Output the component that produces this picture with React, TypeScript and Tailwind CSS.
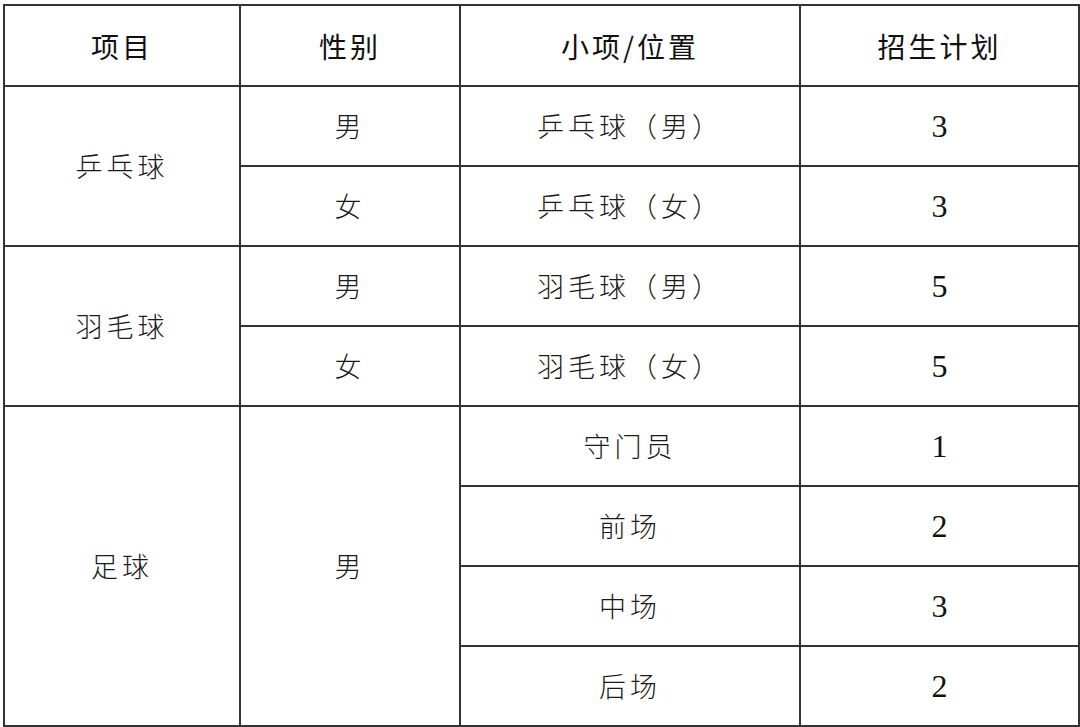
const head = ["项目", "性别", "小项/位置", "招生计划"];

type Row = { sport?: { name: string; span: number }; gender?: { name: string; span: number }; item: string; plan: number };

const rows: Row[] = [
  { sport: { name: "乒乓球", span: 2 }, gender: { name: "男", span: 1 }, item: "乒乓球（男）", plan: 3 },
  { gender: { name: "女", span: 1 }, item: "乒乓球（女）", plan: 3 },
  { sport: { name: "羽毛球", span: 2 }, gender: { name: "男", span: 1 }, item: "羽毛球（男）", plan: 5 },
  { gender: { name: "女", span: 1 }, item: "羽毛球（女）", plan: 5 },
  { sport: { name: "足球", span: 4 }, gender: { name: "男", span: 4 }, item: "守门员", plan: 1 },
  { item: "前场", plan: 2 },
  { item: "中场", plan: 3 },
  { item: "后场", plan: 2 },
];

const cell = "border-2 border-[#333] text-center align-middle p-0";
const cjk = "font-['Noto_Sans_CJK_SC',sans-serif] font-light text-[27px] tracking-[4px] text-[#1a1a1a]";

export default function App() {
  return (
    <div className="w-[1080px] h-[727px] bg-white pt-[4px] pl-[3px]">
      <table className="border-collapse table-fixed w-[1075px]">
        <colgroup>
          <col className="w-[236px]" />
          <col className="w-[220px]" />
          <col className="w-[340px]" />
          <col className="w-[279px]" />
        </colgroup>
        <thead>
          <tr className="h-[81px]">
            {head.map((h) => (
              <th
                key={h}
                className={`${cell} font-['Noto_Sans_CJK_SC',sans-serif] font-normal text-[28px] tracking-[3px] text-[#111]`}
              >
                {h}
              </th>
            ))}
          </tr>
        </thead>
        <tbody>
          {rows.map((r, i) => (
            <tr key={i} className="h-[80px]">
              {r.sport && (
                <td rowSpan={r.sport.span} className={`${cell} ${cjk}`}>
                  {r.sport.name}
                </td>
              )}
              {r.gender && (
                <td rowSpan={r.gender.span} className={`${cell} ${cjk}`}>
                  {r.gender.name}
                </td>
              )}
              <td className={`${cell} ${cjk}`}>{r.item}</td>
              <td className={`${cell} font-['Liberation_Serif',serif] text-[32px] text-[#111]`}>{r.plan}</td>
            </tr>
          ))}
        </tbody>
      </table>
    </div>
  );
}
